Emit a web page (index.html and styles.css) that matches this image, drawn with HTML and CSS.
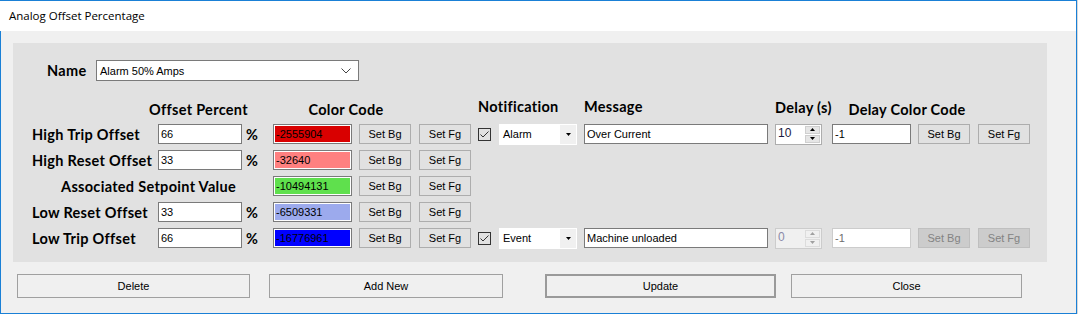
FILE: index.html
```html
<!DOCTYPE html>
<html>
<head>
<meta charset="utf-8">
<title>Analog Offset Percentage</title>
<link rel="stylesheet" href="styles.css">
</head>
<body>
<div class="window">
  <div class="titlebar">Analog Offset Percentage</div>
  <div class="client">
    <div class="panel">
      <div class="name-row">
        <span class="lbl name-lbl">Name</span>
        <div class="select">
          <span>Alarm 50% Amps</span>
          <svg class="chev" width="10" height="6" viewBox="0 0 10 6"><polyline points="0.5,0.5 5,5 9.5,0.5" fill="none" stroke="#444" stroke-width="1"/></svg>
        </div>
      </div>
      <div class="grid">
        <div class="hdr c-offset">Offset Percent</div>
        <div class="hdr c-color">Color Code</div>
        <div class="hdr hdr-up c-notif">Notification</div>
        <div class="hdr hdr-up c-msg">Message</div>
        <div class="hdr hdr-mid c-delay">Delay (s)</div>
        <div class="hdr c-dcolor">Delay Color Code</div>

        <div class="lbl c-label">High Trip Offset</div>
        <div class="txt w-offset">66</div>
        <div class="lbl pct">%</div>
        <div class="swatch sw-red">-2555904</div>
        <div class="btn">Set Bg</div>
        <div class="btn">Set Fg</div>
        <svg class="chk" width="13" height="13" viewBox="0 0 13 13"><rect x="0.5" y="0.5" width="12" height="12" fill="none" stroke="#333"/><polyline points="2.5,6.5 5,9 10.5,3.5" fill="none" stroke="#333" stroke-width="1"/></svg>
        <div class="combo"><span>Alarm</span><span class="combo-btn"><svg width="5" height="3" viewBox="0 0 5 3"><polygon points="0,0 5,0 2.5,3" fill="#000"/></svg></span></div>
        <div class="txt w-msg">Over Current</div>
        <div class="spin"><span class="spin-val">10</span><span class="spin-btns"><span class="spin-b"><svg width="5" height="3" viewBox="0 0 5 3"><polygon points="0,3 5,3 2.5,0" fill="#000"/></svg></span><span class="spin-b"><svg width="5" height="3" viewBox="0 0 5 3"><polygon points="0,0 5,0 2.5,3" fill="#000"/></svg></span></span></div>
        <div class="txt w-dcolor">-1</div>
        <div class="btn">Set Bg</div>
        <div class="btn">Set Fg</div>

        <div class="lbl c-label">High Reset Offset</div>
        <div class="txt w-offset">33</div>
        <div class="lbl pct">%</div>
        <div class="swatch sw-pink">-32640</div>
        <div class="btn">Set Bg</div>
        <div class="btn">Set Fg</div>

        <div class="lbl c-assoc">Associated Setpoint Value</div>
        <div class="swatch sw-green">-10494131</div>
        <div class="btn">Set Bg</div>
        <div class="btn">Set Fg</div>

        <div class="lbl c-label">Low Reset Offset</div>
        <div class="txt w-offset">33</div>
        <div class="lbl pct">%</div>
        <div class="swatch sw-lav">-6509331</div>
        <div class="btn">Set Bg</div>
        <div class="btn">Set Fg</div>

        <div class="lbl c-label">Low Trip Offset</div>
        <div class="txt w-offset">66</div>
        <div class="lbl pct">%</div>
        <div class="swatch sw-blue">-16776961</div>
        <div class="btn">Set Bg</div>
        <div class="btn">Set Fg</div>
        <svg class="chk" width="13" height="13" viewBox="0 0 13 13"><rect x="0.5" y="0.5" width="12" height="12" fill="none" stroke="#333"/><polyline points="2.5,6.5 5,9 10.5,3.5" fill="none" stroke="#333" stroke-width="1"/></svg>
        <div class="combo"><span>Event</span><span class="combo-btn"><svg width="5" height="3" viewBox="0 0 5 3"><polygon points="0,0 5,0 2.5,3" fill="#000"/></svg></span></div>
        <div class="txt w-msg">Machine unloaded</div>
        <div class="spin spin-dis"><span class="spin-val">0</span><span class="spin-btns"><span class="spin-b"><svg width="5" height="3" viewBox="0 0 5 3"><polygon points="0,3 5,3 2.5,0" fill="#a0a0a0"/></svg></span><span class="spin-b"><svg width="5" height="3" viewBox="0 0 5 3"><polygon points="0,0 5,0 2.5,3" fill="#a0a0a0"/></svg></span></span></div>
        <div class="txt w-dcolor txt-dis">-1</div>
        <div class="btn btn-dis">Set Bg</div>
        <div class="btn btn-dis">Set Fg</div>
      </div>
    </div>
    <div class="actions">
      <div class="abtn a-delete">Delete</div>
      <div class="abtn a-add">Add New</div>
      <div class="abtn a-update">Update</div>
      <div class="abtn a-close">Close</div>
    </div>
  </div>
</div>
</body>
</html>
```

FILE: styles.css
```css
* { box-sizing: border-box; }
html, body { margin: 0; padding: 0; }
body {
  width: 1078px;
  height: 314px;
  overflow: hidden;
  background: #d8d8d8;
  font-family: "Liberation Sans", Arial, sans-serif;
  font-size: 11px;
  color: #000;
}
.window {
  width: 1077px;
  height: 314px;
  border: 1px solid #1a80d6;
  border-left: none;
  display: flex;
  flex-direction: column;
  background: #fff;
}
.titlebar {
  height: 30px;
  padding-left: 9px;
  font-family: "Open Sans", "Noto Sans", sans-serif;
  font-size: 11.5px;
  line-height: 30px;
  color: #000;
  background: #fff;
}
.client {
  flex: 1;
  background: #f0f0f0;
  border-left: 1px solid #1a80d6;
  padding: 12px 0 0 12px;
}
.panel {
  width: 1034px;
  background: #e1e1e1;
  padding: 17px 0 14px 19px;
}
.lbl {
  font-family: Lato, "Open Sans", sans-serif;
  font-weight: 700;
  font-size: 14.5px;
  letter-spacing: 0.3px;
  color: #000;
  white-space: nowrap;
}
.name-row {
  display: flex;
  align-items: center;
  height: 21px;
  padding-left: 15px;
}
.name-lbl { width: 49px; }
.select {
  width: 263px;
  height: 21px;
  background: #fff;
  border: 1px solid #7a7a7a;
  display: flex;
  align-items: center;
  justify-content: space-between;
  padding: 0 7px 0 3px;
}
.chev { display: block; }

.grid {
  margin-top: 13px;
  display: grid;
  grid-template-columns: 126px 87px 28px 86px 60px 59px 21px 85px 191px 57px 86px 60px 52px;
  grid-template-rows: 24px repeat(5, 20px);
  row-gap: 6px;
  align-items: center;
  justify-items: start;
}
.hdr {
  font-family: Lato, "Open Sans", sans-serif;
  font-weight: 700;
  font-size: 14.5px;
  letter-spacing: 0.3px;
  line-height: 14px;
  white-space: nowrap;
  align-self: end;
  padding-bottom: 1px;
}
.hdr-up { padding-bottom: 4px; }
.hdr-mid { padding-bottom: 3px; }
.c-offset { grid-column: 2 / span 1; justify-self: center; margin-right: 6px; }
.c-color { grid-column: 4 / span 2; justify-self: center; }
.c-notif { grid-column: 7 / span 2; }
.c-msg { grid-column: 9 / span 1; }
.c-delay { grid-column: 10 / span 1; }
.c-dcolor { grid-column: 11 / span 2; justify-self: center; margin-left: 4px; }

.c-label { grid-column: 1 / span 1; }
.c-assoc { grid-column: 1 / span 3; justify-self: center; margin-right: 8px; }
.pct { padding-left: 1px; letter-spacing: 0; }

.txt {
  height: 20px;
  background: #fff;
  border: 1px solid #7a7a7a;
  padding: 0 2px;
  line-height: 18px;
  white-space: nowrap;
  overflow: hidden;
}
.w-offset { width: 84px; }
.w-msg { width: 184px; }
.w-dcolor { width: 79px; }
.txt-dis { border-color: #cccccc; color: #6d6d6d; }

.swatch {
  width: 79px;
  height: 20px;
  border: 1px solid #7a7a7a;
  box-shadow: inset 0 0 0 1px #fff;
  padding: 0 2px;
  line-height: 18px;
  white-space: nowrap;
}
.sw-red { background: #d90000; }
.sw-pink { background: #ff8080; }
.sw-green { background: #5fe04d; }
.sw-lav { background: #9caaed; }
.sw-blue { background: #0000ff; }

.btn {
  width: 52px;
  height: 20px;
  background: #e1e1e1;
  border: 1px solid #adadad;
  text-align: center;
  line-height: 18px;
  white-space: nowrap;
}
.btn-dis { background: #cccccc; border-color: #bfbfbf; color: #838383; }

.chk { display: block; }

.combo {
  width: 78px;
  height: 21px;
  background: #fff;
  border: 1px solid #fff;
  display: flex;
  align-items: stretch;
}
.combo > span:first-child {
  flex: 1;
  padding-left: 3px;
  line-height: 19px;
}
.combo-btn {
  width: 16px;
  background: #f0f0f0;
  display: flex;
  align-items: center;
  justify-content: center;
}
.combo-btn svg { display: block; }

.spin {
  width: 47px;
  height: 21px;
  background: #fff;
  border: 1px solid #adadad;
  display: flex;
}
.spin-val {
  flex: 1;
  padding-left: 2px;
  line-height: 17px;
  font-size: 12px;
  color: #1a1a40;
}
.spin-btns {
  width: 16px;
  display: flex;
  flex-direction: column;
  padding: 1px 1px 1px 0;
  gap: 1px;
}
.spin-b {
  flex: 1;
  background: #e6e6e6;
  border: 1px solid #cfcfcf;
  display: flex;
  align-items: center;
  justify-content: center;
}
.spin-b svg { display: block; }
.spin-dis { background: #f0f0f0; border-color: #cccccc; }
.spin-dis .spin-val { color: #8a8aa8; }
.spin-dis .spin-b { background: #f0f0f0; border-color: #dcdcdc; }

.actions {
  display: flex;
  margin: 12px 0 0 4px;
}
.abtn {
  height: 24px;
  background: #f0f0f0;
  border: 1px solid #a0a0a0;
  text-align: center;
  line-height: 22px;
  white-space: nowrap;
}
.a-delete { width: 233px; }
.a-add { width: 234px; margin-left: 19px; }
.a-update { width: 231px; margin-left: 42px; border: 2px solid #9a9a9a; line-height: 20px; }
.a-close { width: 231px; margin-left: 15px; }
```
